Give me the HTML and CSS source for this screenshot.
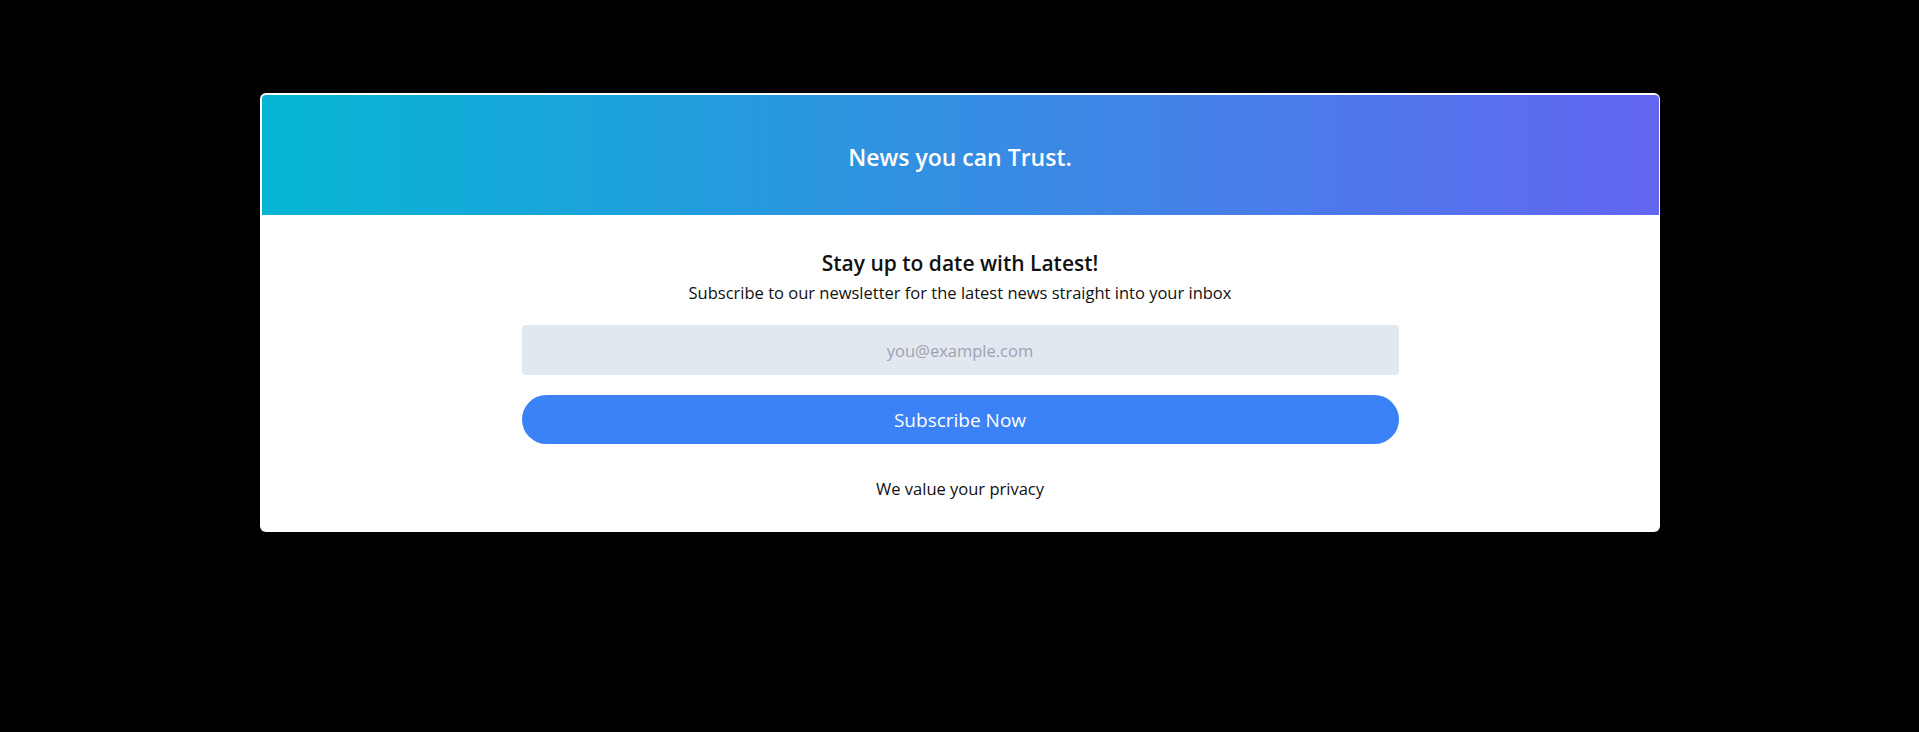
FILE: index.html
```html
<!DOCTYPE html>
<html lang="en">
<head>
<meta charset="utf-8">
<title>Newsletter</title>
<link rel="stylesheet" href="styles.css">
</head>
<body>
<main class="page">
  <section class="card">
    <header class="card-header">
      <h1 class="brand">News you can Trust.</h1>
    </header>
    <div class="card-body">
      <h2 class="title">Stay up to date with Latest!</h2>
      <p class="subtitle">Subscribe to our newsletter for the latest news straight into your inbox</p>
      <form class="form">
        <input class="email" type="email" placeholder="you@example.com">
        <button class="btn" type="button">Subscribe Now</button>
      </form>
      <p class="privacy">We value your privacy</p>
    </div>
  </section>
</main>
</body>
</html>
```
FILE: styles.css
```css
* { box-sizing: border-box; }
html, body { margin: 0; padding: 0; background: #000; }
body { font-family: "Open Sans", "Noto Sans", sans-serif; color: #111; }
.page { padding-top: 93px; }
.card {
  width: 1400px;
  margin: 0 auto;
  background: #fff;
  border-radius: 6px;
  padding: 2px 1px 0 2px;
}
.card-header {
  height: 120px;
  display: flex;
  align-items: center;
  justify-content: center;
  background: linear-gradient(to right, #06b6d4, #6366f1);
  border-radius: 4px 4px 0 0;
}
.brand {
  margin: 0;
  padding-top: 4px;
  color: #fff;
  font-size: 23px;
  font-weight: 600;
  line-height: 32px;
}
.card-body {
  display: flex;
  flex-direction: column;
  align-items: center;
  padding: 34px 0 31px;
  text-align: center;
}
.title {
  margin: 0;
  font-size: 21px;
  line-height: 28px;
  font-weight: 600;
  color: #111;
}
.subtitle {
  margin: 4px 0 0;
  font-size: 16.5px;
  line-height: 24px;
  color: #111;
}
.form {
  width: 877px;
  margin-top: 20px;
  display: flex;
  flex-direction: column;
  gap: 20px;
}
.email {
  height: 50px;
  border: none;
  border-radius: 4px;
  background: #e2e8f0;
  text-align: center;
  font-family: inherit;
  font-size: 16.5px;
  color: #111;
  outline: none;
}
.email::placeholder { color: #9ca3af; }
.btn {
  height: 49px;
  border: none;
  border-radius: 999px;
  background: #3b82f6;
  color: #fff;
  font-family: inherit;
  font-size: 19px;
  cursor: pointer;
}
.privacy {
  margin: 33px 0 0;
  font-size: 16.5px;
  line-height: 24px;
  color: #111;
}
```
